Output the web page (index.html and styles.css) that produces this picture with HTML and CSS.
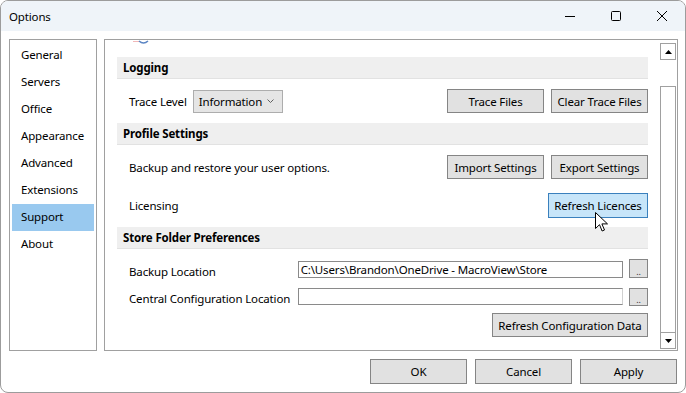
FILE: index.html
```html
<!DOCTYPE html>
<html>
<head>
<meta name="viewport" content="width=device-width, initial-scale=1">
<link rel="stylesheet" href="styles.css">
</head>
<body>

<div class="window">
  <div class="titlebar">
    <span class="title">Options</span>
    <div class="controls">
      <span class="ctl"><svg width="12" height="12" viewBox="0 0 12 12"><path d="M1 6.5h10" stroke="#000" stroke-width="1"/></svg></span>
      <span class="ctl"><svg width="12" height="12" viewBox="0 0 12 12"><rect x="1.5" y="1.5" width="9" height="9" rx="1" fill="none" stroke="#000" stroke-width="1"/></svg></span>
      <span class="ctl"><svg width="12" height="12" viewBox="0 0 12 12"><path d="M1 1l10 10M11 1L1 11" stroke="#000" stroke-width="1"/></svg></span>
    </div>
  </div>

  <div class="body">
    <div class="main">
      <ul class="nav">
        <li>General</li>
        <li>Servers</li>
        <li>Office</li>
        <li>Appearance</li>
        <li>Advanced</li>
        <li>Extensions</li>
        <li class="active">Support</li>
        <li>About</li>
      </ul>

      <div class="panel">
        <div class="content">
          <!-- logo scrolled mostly out of view -->
          <div class="logo">
            <svg width="22" height="6" viewBox="0 0 22 6"><path d="M1 1.5h6" stroke="#f2b8b8" stroke-width="1"/><path d="M7 1q4.5 4 9 0" fill="none" stroke="#5c86c4" stroke-width="1.5"/></svg>
          </div>

          <div class="section-head">Logging</div>
          <div class="row">
            <span class="label">Trace Level</span>
            <div class="select">Information<svg width="7" height="5" viewBox="0 0 7 5"><path d="M0.5 0.5l3 3 3-3" fill="none" stroke="#606060" stroke-width="1"/></svg></div>
            <span class="spacer"></span>
            <button class="btn">Trace Files</button>
            <button class="btn">Clear Trace Files</button>
          </div>

          <div class="section-head">Profile Settings</div>
          <div class="row">
            <span class="label">Backup and restore your user options.</span>
            <span class="spacer"></span>
            <button class="btn">Import Settings</button>
            <button class="btn">Export Settings</button>
          </div>
          <div class="row row-lic">
            <span class="label">Licensing</span>
            <span class="spacer"></span>
            <button class="btn btn-hover">Refresh Licences</button>
          </div>

          <div class="section-head head-store">Store Folder Preferences</div>
          <div class="row row-field">
            <span class="label field-label">Backup Location</span>
            <div class="input">C:\Users\Brandon\OneDrive - MacroView\Store</div>
            <button class="btn btn-dots">..</button>
          </div>
          <div class="row row-field row-central">
            <span class="label field-label">Central Configuration Location</span>
            <div class="input"></div>
            <button class="btn btn-dots">..</button>
          </div>
          <div class="row row-refresh">
            <span class="spacer"></span>
            <button class="btn btn-config">Refresh Configuration Data</button>
          </div>
        </div>

        <div class="scrollbar">
          <div class="sb-btn"><svg width="7" height="4" viewBox="0 0 7 4"><path d="M0 4L3.5 0 7 4z" fill="#000"/></svg></div>
          <div class="sb-thumb"></div>
          <div class="sb-btn"><svg width="7" height="4" viewBox="0 0 7 4"><path d="M0 0L3.5 4 7 0z" fill="#000"/></svg></div>
        </div>
      </div>
    </div>

    <div class="footer">
      <button class="btn btn-foot">OK</button>
      <button class="btn btn-foot">Cancel</button>
      <button class="btn btn-foot">Apply</button>
    </div>
  </div>

  <svg class="cursor" width="13" height="21" viewBox="0 0 13 21"><path d="M0.5 0.5v16l4-3.8 2.6 6.3 2.4-1-2.6-6.1h5.6z" fill="#fff" stroke="#000" stroke-width="1" stroke-linejoin="round"/></svg>
</div>

</body>
</html>
```

FILE: styles.css
```css
body {
    margin: 0;
    background: #fff;
    font-family: "Noto Sans", "Open Sans", sans-serif;
    font-size: 11.5px;
    letter-spacing: -0.15px;
    color: #000;
}

.window {
    position: relative;
    width: 686px;
    height: 393px;
    box-sizing: border-box;
    border: 1px solid #9c9c9c;
    border-radius: 8px;
    background: #fff;
    overflow: hidden;
}

.titlebar {
    height: 30px;
    background: #eff4f9;
    display: flex;
    align-items: center;
    justify-content: space-between;
}

.title {
    padding-left: 8px;
}

.controls {
    display: flex;
    height: 30px;
}

.ctl {
    width: 46px;
    display: flex;
    align-items: center;
    justify-content: center;
}

.body {
    padding: 8px 0 0 8px;
}

.main {
    display: flex;
    gap: 7px;
    height: 312px;
}

.nav {
    list-style: none;
    margin: 0;
    padding: 2px 2px 0 2px;
    width: 88px;
    box-sizing: border-box;
    border: 1px solid #a0a0a0;
}

.nav li {
    height: 27px;
    line-height: 26px;
    padding-left: 9px;
}

.nav li.active {
    background: #99c9ef;
}

.panel {
    width: 574px;
    box-sizing: border-box;
    border: 1px solid #a0a0a0;
    display: flex;
}

.content {
    width: 531px;
    padding-left: 12px;
}

.logo {
    height: 17px;
    padding-left: 15px;
}

.logo svg {
    display: block;
}

.section-head {
    height: 21px;
    line-height: 22px;
    background: #efefef;
    border-bottom: 1px solid #e2e2e2;
    padding-left: 6px;
    font-weight: bold;
    margin-top: 10px;
}

.logo + .section-head {
    margin-top: 0;
}

.row {
    display: flex;
    align-items: center;
    gap: 7px;
    height: 24px;
    margin-top: 10px;
    padding-left: 12px;
}

.row-lic {
    height: 25px;
    margin-top: 14px;
}

.head-store {
    margin-top: 9px;
}

.row-field {
    height: 19px;
    gap: 6px;
    margin-top: 10px;
}

.row-field .label {
    padding-top: 6px;
}

.row-central {
    height: 17px;
    margin-top: 10px;
}

.row-central .label {
    padding-top: 3px;
}

.row-refresh {
    margin-top: 8px;
}

.label {
    white-space: nowrap;
}

.field-label {
    width: 163px;
}

.spacer {
    flex: 1;
}

.select {
    display: flex;
    align-items: center;
    justify-content: space-between;
    width: 90px;
    height: 23px;
    box-sizing: border-box;
    margin-left: -1px;
    padding: 0 8px 0 5px;
    background: #e5e5e5;
    border: 1px solid #adadad;
}

.btn {
    font-family: inherit;
    font-size: 11.5px;
    letter-spacing: -0.15px;
    color: #000;
    height: 24px;
    box-sizing: border-box;
    padding: 0;
    background: #e1e1e1;
    border: 1px solid #858585;
    width: 97px;
}

.btn-hover {
    width: 100px;
    height: 25px;
    background: #c7e5f9;
    border-color: #3a80bd;
}

.btn-dots {
    width: 19px;
    height: 19px;
    font-size: 9px;
    line-height: 9px;
    padding-top: 6px;
    color: #333;
}

.row-central .btn-dots {
    height: 18px;
}

.btn-config {
    width: 156px;
}

.input {
    width: 326px;
    height: 17px;
    box-sizing: border-box;
    border: 1px solid #8a8a8a;
    line-height: 15px;
    padding-left: 2px;
    white-space: nowrap;
    overflow: hidden;
    align-self: flex-end;
}

.row-central .input {
    border-right-color: #d0d0d0;
}

.scrollbar {
    width: 16px;
    margin-left: 12px;
    padding-top: 3px;
}

.sb-btn {
    height: 17px;
    box-sizing: border-box;
    border: 1px solid #a0a0a0;
    display: flex;
    align-items: center;
    justify-content: center;
}

.sb-thumb {
    height: 246px;
    margin-top: 26px;
    box-sizing: border-box;
    border: 1px solid #a0a0a0;
    border-bottom: none;
}

.footer {
    display: flex;
    justify-content: flex-end;
    gap: 8px;
    margin-top: 8px;
    padding-right: 8px;
}

.btn-foot {
    width: 97px;
    height: 25px;
}

.cursor {
    position: absolute;
    left: 594px;
    top: 211px;
}
```
